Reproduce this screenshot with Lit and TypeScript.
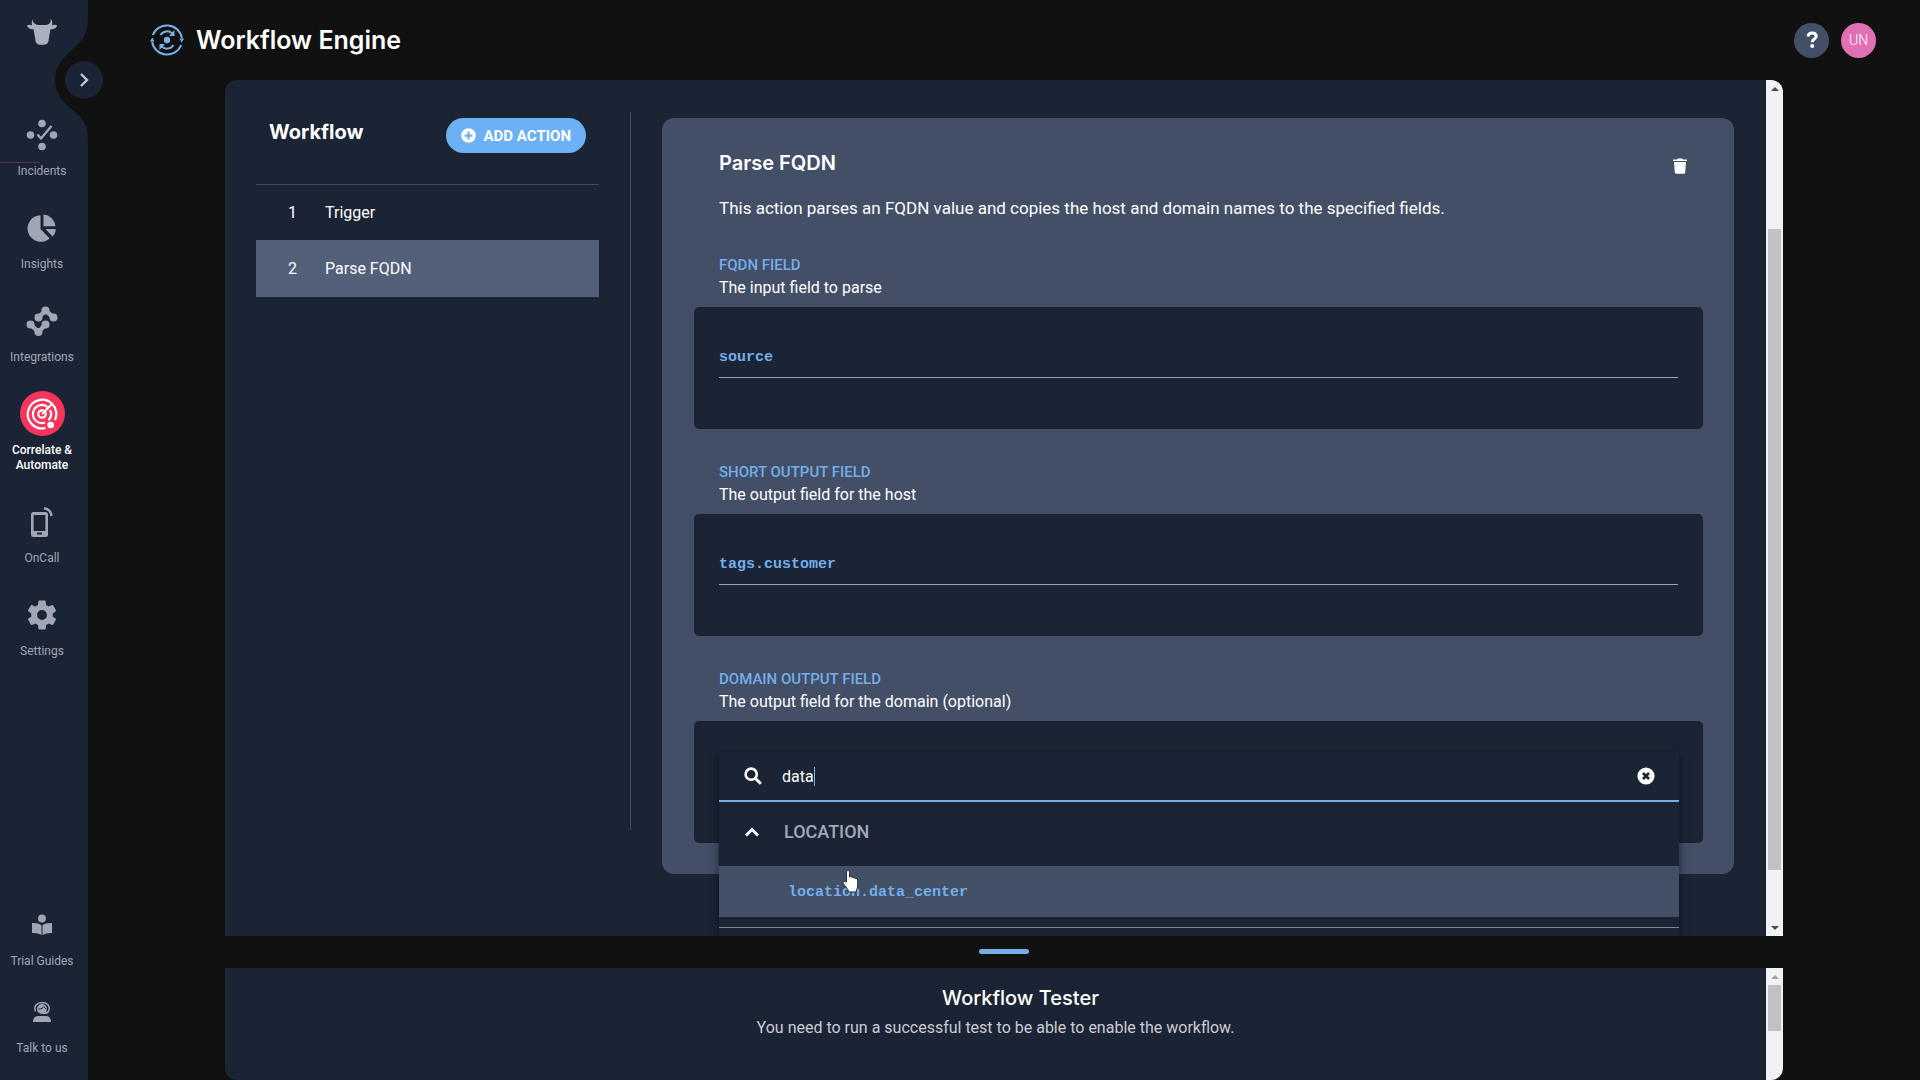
import { LitElement, html, css, svg, nothing } from "lit";
import { customElement, property, state } from "lit/decorators.js";
import { classMap } from "lit/directives/class-map.js";

const icons: Record<string, unknown> = {
  bull: svg`<svg viewBox="0 0 32 28" width="32" height="28"><path fill="currentColor" d="M7 1.200c-.6 2 .2 3.600 2.200 4.800 1 .6 2.200.9 3.300.9h7c1.100 0 2.300-.3 3.300-.9 2-1.200 2.300-3.200 1.500-5.500 1.900 1.700 2.500 4.300 1.700 6.900 1.600-.7 3.400-.8 5.200.1-.8 2.700-3.300 4.200-6.700 3.700l-1 5.300-1 6.500c-.3 2.300-2.300 3.700-4.700 3.700h-3.600c-2.400 0-4.400-1.400-4.700-3.700l-1-6.500-1-5.300C4.300 11.700 1.800 10.200 1 7.500c1.800-.9 3.600-.8 5.200-.1C5.400 5 5.600 2.800 7 1.200Z"/></svg>`,
  incidents: svg`<svg viewBox="0 0 32 32" width="32" height="32" fill="currentColor"><circle cx="16" cy="4.500" r="3.800"/><circle cx="4.500" cy="16" r="3.800"/><circle cx="27.500" cy="16" r="3.800"/><circle cx="16" cy="27.500" r="3.800"/><path d="m11.500 15.500 3.500 4L25.500 7" fill="none" stroke="currentColor" stroke-width="2.400"/></svg>`,
  insights: svg`<svg viewBox="0 0 30 30" width="30" height="30" fill="currentColor"><path d="M13.500 2.200V16l9.200 9.400A13.300 13.300 0 1 1 13.500 2.200Z"/><path d="M16.500 1.500A13 13 0 0 1 28.500 13.300h-12Z"/><path d="M18.500 16h10.200c0 3-1.200 5.600-3.200 7.600Z"/></svg>`,
  integrations: svg`<svg viewBox="0 0 32 32" width="32" height="32" fill="currentColor" stroke="currentColor"><path d="m4.500 19.500 8 7.500 7-7.500M12.500 12.500l7-7 8 7" fill="none" stroke-width="4.400"/><g stroke="none"><circle cx="4.500" cy="19.500" r="4"/><circle cx="12.500" cy="27" r="4"/><circle cx="19.500" cy="19.500" r="4"/><circle cx="12.500" cy="12.500" r="4"/><circle cx="19.500" cy="5.500" r="4"/><circle cx="27.500" cy="12.500" r="4"/></g></svg>`,
  correlate: svg`<svg viewBox="0 0 32 32" width="32" height="32" fill="none" stroke="currentColor" stroke-width="2.200"><path d="M19.500 30A14.300 14.300 0 1 1 26 5.800"/><path d="M26 5.800A14.300 14.300 0 0 1 29 22"/><path d="M19 24.500A9 9 0 1 1 21.300 8.800"/><path d="M24 12A9 9 0 0 1 22.500 22.300"/><circle cx="16" cy="16" r="3.700"/><path d="M16 16 26.500 5.500"/><circle cx="24.600" cy="27" r="3.300" fill="currentColor" stroke="none"/></svg>`,
  oncall: svg`<svg viewBox="0 0 24 32" width="24" height="32"><path fill="currentColor" fill-rule="evenodd" d="M3.500 6h12A2.500 2.500 0 0 1 18 8.500v20a2.500 2.500 0 0 1-2.500 2.500h-12A2.500 2.500 0 0 1 1 28.500v-20A2.500 2.500 0 0 1 3.500 6ZM3.600 9v16h11.800V9Zm3.400 17.500v2h5v-2Z"/><path d="M14 2.300c4.500.5 7 3.200 7.500 7.700" fill="none" stroke="currentColor" stroke-width="2.400"/></svg>`,
  settings: svg`<svg viewBox="2 2 20 20" width="30" height="30"><path fill="currentColor" d="M19.140 12.940c.04-.3.060-.61.060-.94s-.02-.64-.07-.94l2.030-1.580a.49.49 0 0 0 .12-.61l-1.920-3.320a.49.49 0 0 0-.59-.22l-2.390.96c-.5-.38-1.030-.7-1.620-.94l-.36-2.540a.48.48 0 0 0-.48-.41h-3.840a.47.47 0 0 0-.47.41l-.36 2.540c-.59.24-1.130.57-1.620.94l-2.390-.96a.48.48 0 0 0-.59.22L2.740 8.870a.48.48 0 0 0 .12.61l2.030 1.580a7 7 0 0 0 0 1.880l-2.030 1.580a.49.49 0 0 0-.12.61l1.920 3.320c.12.22.37.29.59.22l2.390-.96c.5.38 1.030.7 1.620.94l.36 2.540c.05.24.24.41.48.41h3.840c.24 0 .44-.17.47-.41l.36-2.540a6.800 6.800 0 0 0 1.620-.94l2.390.96c.22.080.47 0 .59-.22l1.920-3.320a.48.48 0 0 0-.12-.61ZM12 15.300a3.300 3.300 0 1 1 0-6.600 3.300 3.300 0 0 1 0 6.600Z"/></svg>`,
  guides: svg`<svg viewBox="0 0 22 22" width="22" height="22" fill="currentColor"><circle cx="11" cy="4.500" r="3.900"/><path d="M1 9c4-.3 7 .6 9.500 2.300V21C8 19.500 5 18.800 1 19ZM21 9c-4-.3-7 .6-9.500 2.300V21c2.500-1.500 5.500-2.200 9.500-2Z"/></svg>`,
  talk: svg`<svg viewBox="0 0 22 22" width="22" height="22"><circle cx="11" cy="8" r="5" fill="currentColor"/><path d="M4.500 10.500C2.500 4.500 6 1.500 11 1.500s8.500 3 6.700 8.500c-.6 1.700-2.700 2.500-5.700 2.300" fill="none" stroke="currentColor" stroke-width="1.500"/><path d="M7.500 8c3 0 4.500-1 5.500-2.500.5 1.500 1.500 2.300 2.700 2.500" fill="none" stroke="#1b2435"/><path fill="currentColor" d="M2 21c0-3.600 1.800-6 5-6h8c3.200 0 5 2.400 5 6Z"/></svg>`,
  chevronRight: svg`<svg viewBox="0 0 12 16" width="12" height="16"><path d="m3 2 6 6-6 6" fill="none" stroke="currentColor" stroke-width="2.400"/></svg>`,
  chevronUp: svg`<svg viewBox="0 0 16 12" width="16" height="12"><path d="m2 9.500 6-6 6 6" fill="none" stroke="currentColor" stroke-width="2.800"/></svg>`,
  engine: svg`<svg viewBox="0 0 34 34" width="34" height="34" fill="none" stroke="currentColor" stroke-width="2"><path d="M2.800 12A15.200 15.200 0 0 1 31.900 15M31.200 22A15.200 15.200 0 0 1 2.100 19"/><path d="M10.500 12C13 8 18.500 7 22.500 10.500M23.500 22C21 26 15.500 27 11.500 23.500"/><path fill="currentColor" stroke="none" d="M29.500 15.500h4.700l-2.600 4ZM4.500 18.500H-.2l2.600-4ZM24.500 7v6h-5.500ZM9.500 27v-6H15Z"/><circle cx="17" cy="17" r="3.200" fill="currentColor" stroke="none"/></svg>`,
  plus: svg`<svg viewBox="0 0 16 16" width="15" height="15"><path fill="currentColor" fill-rule="evenodd" d="M8 .2a7.800 7.800 0 1 1 0 15.600A7.800 7.800 0 0 1 8 .2ZM6.800 3.800v3h-3v2.400h3v3h2.400v-3h3V6.800h-3v-3Z"/></svg>`,
  trash: svg`<svg viewBox="0 0 14 16" width="14" height="16"><path fill="currentColor" d="M0 1.500h4L5 .5h4l1 1h4V3H0ZM1 4h12l-.8 10.500c-.1.800-.6 1.200-1.300 1.200H3.100c-.7 0-1.200-.4-1.300-1.200Z"/></svg>`,
  search: svg`<svg viewBox="0 0 18 18" width="18" height="18"><g fill="none" stroke="currentColor"><circle cx="7.200" cy="7.200" r="5.600" stroke-width="2.600"/><path d="m11.200 11.200 5.600 5.600" stroke-width="3"/></g></svg>`,
  clear: svg`<svg viewBox="0 0 18 18" width="18" height="18"><circle cx="9" cy="9" r="8.600" fill="currentColor"/><path d="m6 6 6 6m0-6-6 6" stroke="#1b2435" stroke-width="2.600"/></svg>`,
  help: svg`<svg viewBox="0 0 12 18" width="12" height="18"><path d="M2 5.500C2.300 3 4 2 6.200 2s4 1.200 4 3.200c0 3-3.900 2.600-3.900 6" fill="none" stroke="currentColor" stroke-width="3"/><circle cx="6.200" cy="15" r="2" fill="currentColor"/></svg>`,
};

@customElement("side-nav")
export class SideNav extends LitElement {
  static styles = css`
    :host { display: flex; flex: none; width: 88px; position: relative; background: #1b2435; font-family: Roboto, sans-serif; }
    .notch { position: absolute; top: 14px; right: 0; color: #111; }
    .toggle { position: absolute; z-index: 1; top: 61px; left: 65px; width: 38px; height: 38px; border: 0; border-radius: 50%; background: #1b2435; color: #c3c9d6; display: grid; place-items: center; padding: 0; }
    nav { display: flex; flex-direction: column; flex: 1; padding: 18px 4px 24px 0; }
    .logo { display: flex; justify-content: center; height: 94px; color: #abb0bf; position: relative; }
    .items, .support { list-style: none; margin: 0; padding: 0; display: flex; flex-direction: column; gap: 26px; }
    .support { margin-top: auto; gap: 20px; }
    li { position: relative; }
    .item { display: flex; flex-direction: column; align-items: center; gap: 7px; color: #a0a6b6; text-decoration: none; font-size: 12px; line-height: 15px; text-align: center; white-space: pre-line; }
    .slot { width: 45px; height: 45px; border-radius: 50%; display: grid; place-items: center; }
    .active { color: #fff; font-weight: 500; }
    .active .slot { background: #f5365c; }
    .trace { position: absolute; left: 0; top: 50px; width: 40px; height: 1px; background: #64304a; }
  `;
  private main = [
    ["incidents", "Incidents"],
    ["insights", "Insights"],
    ["integrations", "Integrations"],
    ["correlate", "Correlate &\nAutomate"],
    ["oncall", "OnCall"],
    ["settings", "Settings"],
  ];
  private support = [["guides", "Trial Guides"], ["talk", "Talk to us"]];

  private item([icon, label]: string[]) {
    return html`<li>
      <a href="#${icon}" class=${classMap({ item: true, active: icon === "correlate" })}><span class="slot">${icons[icon]}</span><span>${label}</span></a>
      ${icon === "incidents" ? html`<span class="trace"></span>` : nothing}
    </li>`;
  }
  render() {
    return html`
      <svg class="notch" width="34" height="130" viewBox="0 0 34 130"><path fill="currentColor" d="M34 0C34 18 31 24 22 32C9 43 1 52 1 66S9 88 22 99C31 107 34 113 34 130Z"/></svg>
      <nav>
        <a class="logo" href="#home" aria-label="Home">${icons.bull}</a>
        <ul class="items">${this.main.map((i) => this.item(i))}</ul>
        <ul class="support">${this.support.map((i) => this.item(i))}</ul>
      </nav>
      <button class="toggle" aria-label="Expand menu">${icons.chevronRight}</button>
    `;
  }
}

@customElement("scroll-track")
export class ScrollTrack extends LitElement {
  @property({ type: Number }) offset = 0;
  @property({ type: Number }) extent = 50;
  static styles = css`
    :host { flex: none; width: 17px; display: flex; flex-direction: column; background: #f2f1f3; }
    .arrow { height: 17px; flex: none; display: grid; place-items: center; color: #4a4a4c; }
    .idle { color: #a3a3a3; }
    .track { flex: 1; min-height: 0; padding: 0 2px; }
    .space { display: block; }
    .thumb { display: block; background: #c1c0c2; }
  `;
  render() {
    return html`
      <span class=${classMap({ arrow: true, idle: this.offset === 0 })}><svg width="8" height="4" viewBox="0 0 8 4"><path fill="currentColor" d="M0 4 4 0l4 4Z"/></svg></span>
      <div class="track">
        <span class="space" style="height:${this.offset}%"></span>
        <span class="thumb" style="height:${this.extent}%"></span>
      </div>
      ${this.offset > 0 ? html`<span class="arrow"><svg width="8" height="4" viewBox="0 0 8 4"><path fill="currentColor" d="m0 0 4 4 4-4Z"/></svg></span>` : nothing}
    `;
  }
}

@customElement("field-picker")
export class FieldPicker extends LitElement {
  @state() private query = "data";
  static styles = css`
    :host { display: block; background: #1b2435; box-shadow: 0 2px 8px rgba(0, 0, 0, 0.55); font-family: Roboto, sans-serif; color: #fff; }
    .search { display: flex; align-items: center; height: 48px; padding: 0 24px 0 25px; border-bottom: 2px solid #78aee6; }
    .query { field-sizing: content; min-width: 8px; margin-left: 20px; padding: 2px 0 0; border: 0; outline: 0; background: none; color: inherit; font: 16px/24px Roboto, sans-serif; }
    .caret { width: 1px; height: 19px; background: #6fb2f7; }
    .clear { margin-left: auto; padding: 0; border: 0; background: none; color: inherit; display: flex; }
    .group { display: flex; align-items: center; width: 100%; height: 64px; gap: 24px; padding: 0 25px 4px; border: 0; background: none; color: #fff; font: 500 18px/24px Roboto, sans-serif; text-align: left; }
    .name { color: #a3a9b5; }
    .option { display: block; width: 100%; height: 51px; padding: 2px 69px 0; border: 0; background: #435066; color: #74aeea; font: bold 15px/24px "Liberation Mono", monospace; text-align: left; }
    .end { height: 60px; margin-top: 10px; border-top: 1px solid #7b8494; }
  `;
  render() {
    return html`
      <div class="search">
        ${icons.search}
        <input class="query" type="text" aria-label="Search fields" .value=${this.query} @input=${(e: Event) => (this.query = (e.target as HTMLInputElement).value)} />
        <span class="caret"></span>
        <button class="clear" aria-label="Clear search" @click=${() => (this.query = "")}>${icons.clear}</button>
      </div>
      <button class="group" aria-expanded="true">${icons.chevronUp}<span class="name">LOCATION</span></button>
      <button class="option">location.data_center</button>
      <div class="end"></div>
    `;
  }
}

@customElement("app-root")
export class AppRoot extends LitElement {
  @state() private selected = 1;
  private steps = ["Trigger", "Parse FQDN"];
  private fields = [
    { id: "fqdn", label: "FQDN FIELD", help: "The input field to parse", value: "source" },
    { id: "short", label: "SHORT OUTPUT FIELD", help: "The output field for the host", value: "tags.customer" },
    { id: "domain", label: "DOMAIN OUTPUT FIELD", help: "The output field for the domain (optional)", value: "" },
  ];

  static styles = css`
    :host { display: flex; height: 100vh; overflow: hidden; position: relative; background: #111; color: #fff; font: 16px/24px Roboto, sans-serif; }
    h1, h2, p, ol { margin: 0; padding: 0; }
    h1, h2 { font-family: Inter, sans-serif; font-weight: 600; }
    button { font-family: inherit; color: inherit; border: 0; padding: 0; }
    .page { flex: 1; min-width: 0; display: flex; flex-direction: column; }
    header { flex: none; height: 80px; display: flex; align-items: center; gap: 12px; padding: 0 44px 0 62px; box-sizing: border-box; }
    .emblem { display: flex; color: #78b0e8; }
    h1 { font-size: 25px; line-height: 32px; margin-right: auto; }
    .round { width: 35px; height: 35px; border-radius: 50%; display: grid; place-items: center; background: #424f66; }
    .avatar { background: #e06fb3; font-size: 14px; font-weight: 300; }
    main { flex: 1; min-height: 0; display: flex; flex-direction: column; padding: 0 137px; }
    .panel { display: flex; overflow: hidden; background: #1b2435; }
    .editor { flex: 1; min-height: 0; border-radius: 12px 12px 0 0; }
    .canvas { flex: 1; min-width: 0; display: flex; padding: 0 32px 0 31px; }
    .flow { flex: none; width: 343px; padding-top: 38px; }
    .flowhead { display: flex; justify-content: space-between; padding: 0 13px; height: 66px; }
    h2 { font-size: 20px; line-height: 28px; }
    .flowhead h2 { font-weight: 700; }
    .add { height: 35px; padding: 0 15px; border-radius: 18px; display: flex; align-items: center; gap: 8px; background: #6cb1f5; font-size: 15px; font-weight: 700; }
    .steps { list-style: none; border-top: 1px solid #424a5c; }
    .step { width: 100%; height: 55px; padding: 0 32px; display: flex; align-items: center; gap: 28px; background: none; font-size: 16px; line-height: 24px; }
    .step.on { height: 57px; background: #53607a; }
    .rule { flex: none; width: 1px; margin: 32px 31px 106px; background: #454d5e; }
    .card { flex: 1; min-width: 0; align-self: flex-start; margin-top: 38px; padding: 30px 31px 31px 32px; border-radius: 12px; background: #424f66; }
    .cardhead { display: flex; justify-content: space-between; align-items: center; height: 30px; padding: 0 16px 0 25px; }
    .delete { background: none; display: flex; padding-top: 6px; }
    .about { font-size: 17px; padding: 18px 25px 33px; }
    .fields { display: flex; flex-direction: column; gap: 31px; }
    .label { display: block; padding: 0 25px; color: #74aeea; font-size: 15px; font-weight: 500; line-height: 24px; }
    .hint { padding: 0 25px; line-height: 22px; }
    .box { position: relative; height: 122px; margin-top: 8px; padding: 30px 25px 0; border-radius: 5px; background: #1b2435; box-sizing: border-box; }
    .value { display: block; box-sizing: border-box; width: 100%; height: 41px; padding: 0; border: 0; border-bottom: 1px solid #9aa1b0; border-radius: 0; background: none; color: #74aeea; outline: 0; font: bold 15px/24px "Liberation Mono", monospace; }
    .picker { position: absolute; z-index: 1; top: 31px; left: 25px; right: 24px; }
    .resizer { flex: none; height: 32px; display: grid; place-items: center; background: none; cursor: row-resize; }
    .grip { width: 50px; height: 5px; border-radius: 3px; background: #76ade5; margin-top: -2px; }
    .tester { flex: none; height: 112px; border-radius: 0 0 12px 12px; }
    .result { flex: 1; padding-top: 16px; text-align: center; color: #c9ccd4; }
    .result h2 { color: #fff; font-weight: 500; padding-left: 50px; }
    .result p { padding-top: 4px; }
    .cursor { position: absolute; z-index: 2; left: 842px; top: 869px; }
  `;

  render() {
    return html`
      <side-nav></side-nav>
      <div class="page">
        <header>
          <span class="emblem">${icons.engine}</span>
          <h1>Workflow Engine</h1>
          <button class="round" aria-label="Help">${icons.help}</button>
          <button class="round avatar">UN</button>
        </header>
        <main>
          <section class="panel editor">
            <div class="canvas">
              <div class="flow">
                <div class="flowhead">
                  <h2>Workflow</h2>
                  <button class="add">${icons.plus}<span>ADD ACTION</span></button>
                </div>
                <ol class="steps">
                  ${this.steps.map((s, i) => html`<li><button class=${classMap({ step: true, on: i === this.selected })} @click=${() => (this.selected = i)}><span>${i + 1}</span><span>${s}</span></button></li>`)}
                </ol>
              </div>
              <div class="rule"></div>
              <article class="card">
                <div class="cardhead">
                  <h2>Parse FQDN</h2>
                  <button class="delete" aria-label="Delete action">${icons.trash}</button>
                </div>
                <p class="about">This action parses an FQDN value and copies the host and domain names to the specified fields.</p>
                <div class="fields">
                  ${this.fields.map((f) => html`<div>
                    <label class="label" for=${f.id}>${f.label}</label>
                    <p class="hint">${f.help}</p>
                    <div class="box">
                      <input class="value" id=${f.id} type="text" .value=${f.value} />
                      ${f.id === "domain" ? html`<field-picker class="picker"></field-picker>` : nothing}
                    </div>
                  </div>`)}
                </div>
              </article>
            </div>
            <scroll-track .offset=${16} .extent=${78}></scroll-track>
          </section>
          <button class="resizer" aria-label="Resize panels"><span class="grip"></span></button>
          <section class="panel tester">
            <div class="result">
              <h2>Workflow Tester</h2>
              <p>You need to run a successful test to be able to enable the workflow.</p>
            </div>
            <scroll-track .offset=${0} .extent=${48}></scroll-track>
          </section>
        </main>
      </div>
      <svg class="cursor" width="18" height="24" viewBox="0 0 18 24"><path fill="#fff" stroke="#222c3c" d="M4.500 13V3.500c0-2.600 3-2.600 3 0V8c1-.8 2.400-.5 2.700.7 1-.7 2.300-.3 2.600.8 1.500-.7 2.900 0 2.900 1.700V16c0 3.500-1.500 4.200-1.500 7H6.500c0-3-2.800-4.800-5-8.200-1-1.800.8-2.800 3-1.800Z"/></svg>
    `;
  }
}
